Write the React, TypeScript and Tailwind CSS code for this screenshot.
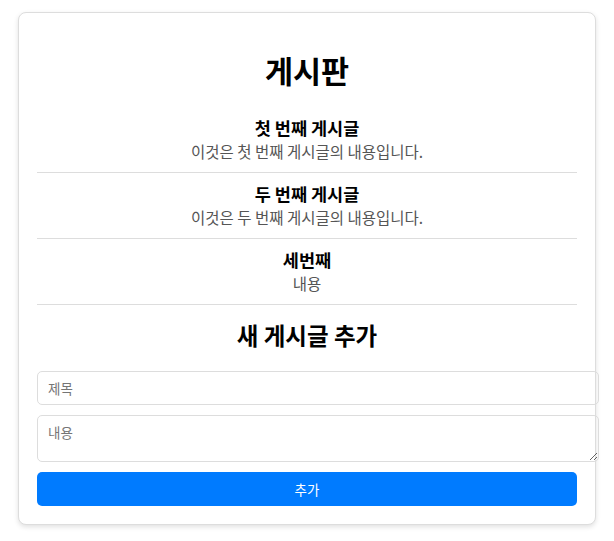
import React, { useState } from 'react';

interface Post {
  id: number;
  title: string;
  content: string;
}

const initialPosts: Post[] = [
  { id: 1, title: '첫 번째 게시글', content: '이것은 첫 번째 게시글의 내용입니다.' },
  { id: 2, title: '두 번째 게시글', content: '이것은 두 번째 게시글의 내용입니다.' },
  { id: 3, title: '세번째', content: '내용' },
];

const font = { fontFamily: '"Noto Sans CJK KR", "Noto Sans", sans-serif' };

export default function App() {
  const [posts, setPosts] = useState<Post[]>(initialPosts);
  const [title, setTitle] = useState('');
  const [content, setContent] = useState('');

  const addPost = () => {
    if (!title.trim()) return;
    setPosts([...posts, { id: Date.now(), title, content }]);
    setTitle('');
    setContent('');
  };

  return (
    <div className="min-h-screen bg-white pt-[12px]" style={font}>
      <div className="mx-[18px] w-[578px] rounded-lg border border-[#ddd] bg-white px-[18px] pt-[18px] pb-[18px] shadow-[0_2px_5px_rgba(0,0,0,0.12)]">
        <h1 className="mt-[18px] mb-[16px] text-center text-[30.5px] font-bold leading-[42px] text-black">게시판</h1>

        <ul>
          {posts.map((post) => (
            <li key={post.id} className="border-b border-[#ddd] pt-[10px] pb-[10px] text-center">
              <h3 className="text-[17.5px] font-bold leading-[22px] text-black">{post.title}</h3>
              <p className="mt-[2px] text-[15.5px] leading-[21px] text-[#555]">{post.content}</p>
            </li>
          ))}
        </ul>

        <h2 className="mt-[14px] text-center text-[23.5px] font-bold leading-[32px] text-black">새 게시글 추가</h2>

        <div className="mt-[20px] flex flex-col gap-[10px]">
          <input
            value={title}
            onChange={(e) => setTitle(e.target.value)}
            placeholder="제목"
            className="box-content h-[20px] w-full rounded-[5px] border border-[#ddd] px-[10px] py-[6px] text-[13.5px] text-black outline-none placeholder:text-[#757575]"
          />
          <textarea
            value={content}
            onChange={(e) => setContent(e.target.value)}
            placeholder="내용"
            className="box-content block h-[33px] w-full rounded-[5px] border border-[#ddd] px-[10px] py-[6px] text-[13.5px] leading-[20px] text-black outline-none placeholder:text-[#757575]"
          />
          <button
            onClick={addPost}
            className="h-[34px] w-full rounded-[5px] bg-[#007bff] text-[13.5px] text-white"
          >
            추가
          </button>
        </div>
      </div>
    </div>
  );
}
